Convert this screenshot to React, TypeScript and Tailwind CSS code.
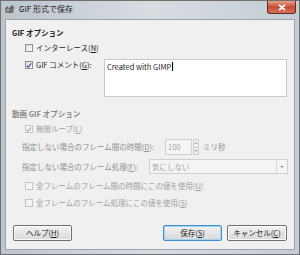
import React from "react";

const jp = { fontFamily: '"Noto Sans CJK JP", "Noto Sans", sans-serif' };

function Check({ checked, disabled }: { checked?: boolean; disabled?: boolean }) {
  return (
    <span
      className={`flex h-[8px] w-[8px] shrink-0 items-center justify-center border ${
        disabled ? "border-[#c4c4c4] bg-[#f4f4f4]" : "border-[#8e8f8f] bg-gradient-to-br from-[#dcdcdc] to-[#fdfdfd]"
      }`}
    >
      {checked && (
        <svg viewBox="0 0 8 8" className="h-[7px] w-[7px]">
          <path
            d="M1 4.2 L3 6.2 L7 1.2"
            fill="none"
            stroke={disabled ? "#a8a8a8" : "#2a4d8f"}
            strokeWidth="1.4"
          />
        </svg>
      )}
    </span>
  );
}

function Mn({ c }: { c: string }) {
  return <span className="underline underline-offset-1">{c}</span>;
}

function Btn({ children, def }: { children: React.ReactNode; def?: boolean }) {
  return (
    <div
      className={`flex h-[16px] items-center justify-center rounded-[2px] border bg-gradient-to-b from-[#f2f2f2] to-[#d9d9d9] text-[7.5px] text-[#1e1e1e] ${
        def ? "border-[#3c8fd0] shadow-[inset_0_0_0_1px_#9fd4f4]" : "border-[#707070] shadow-[inset_0_0_0_1px_#fbfbfb]"
      }`}
    >
      {children}
    </div>
  );
}

export default function App() {
  return (
    <div className="h-[255px] w-[300px] overflow-hidden bg-[#f0f0f0]" style={jp}>
      <div className="flex h-full w-full flex-col border border-[#6f6f6f] bg-gradient-to-r from-[#bcc4cc] via-[#d8dde2] to-[#c4ccd4]">
        {/* title bar */}
        <div className="flex h-[18px] shrink-0 items-start">
          <div className="ml-[3px] mt-[3px] flex h-[10px] w-[11px] items-end">
            <svg viewBox="0 0 11 10" className="h-[10px] w-[11px]">
              <path d="M1 5 L3 2 L5 4 L8 1 L10 3 L9 9 L2 9 Z" fill="#6b6b6b" />
              <circle cx="4" cy="6" r="1.5" fill="#a9a9a9" />
            </svg>
          </div>
          <span className="ml-[4px] mt-[2px] text-[8px] leading-[12px] text-[#1a1a1a]">GIF 形式で保存</span>
          <div className="ml-auto mr-[3px] flex h-[13px] w-[29px] items-center justify-center rounded-b-[3px] border border-t-0 border-[#5e2a20] bg-gradient-to-b from-[#e8a08a] via-[#c84a32] to-[#d8705a]">
            <svg viewBox="0 0 8 7" className="h-[7px] w-[8px]">
              <path d="M1 0.8 L7 6.2 M7 0.8 L1 6.2" stroke="#ffffff" strokeWidth="1.8" />
            </svg>
          </div>
        </div>
        {/* client */}
        <div className="mx-[4px] flex flex-1 flex-col border border-[#9aa3ab] bg-[#f0f0f0] text-[7.5px] leading-[10px] text-[#1e1e1e]">
          <div className="ml-[6px] mt-[7px] h-[12px] font-bold leading-[12px]">GIF オプション</div>
          <div className="ml-[19px] mt-[4px] flex h-[10px] items-center gap-[3px]">
            <Check />
            <span>
              インターレース(<Mn c="N" />)
            </span>
          </div>
          <div className="mt-[6px] flex h-[38px] items-start">
            <div className="ml-[19px] mt-[1px] flex h-[10px] items-center gap-[3px]">
              <Check checked />
              <span>
                GIF コメント(<Mn c="G" />):
              </span>
            </div>
            <div className="ml-auto mr-[7px] h-[38px] w-[183px] border border-[#c8c8c8] bg-white px-[2px] pt-[1px]">
              <span>Created with GIMP</span>
              <span className="ml-[1px] inline-block h-[9px] w-px translate-y-[1px] bg-black" />
            </div>
          </div>
          <div className="ml-[6px] mt-[11px] h-[12px] font-bold leading-[12px] text-[#8a8a8a]">動画 GIF オプション</div>
          <div className="ml-[19px] mt-[4px] flex h-[10px] items-center gap-[3px] text-[#a0a0a0]">
            <Check checked disabled />
            <span>
              無限ループ(<Mn c="L" />)
            </span>
          </div>
          <div className="mt-[5px] flex h-[16px] items-center text-[#8f8f8f]">
            <span className="ml-[16px] w-[143px]">
              指定しない場合のフレーム間の時間(<Mn c="D" />):
            </span>
            <div className="flex h-[16px] w-[27px] items-center border border-[#d0d0d0] bg-[#f4f4f4] pl-[2px] text-[#a4a4a4]">100</div>
            <div className="ml-px flex h-[16px] w-[6px] flex-col">
              <div className="flex flex-1 items-center justify-center border border-[#d0d0d0]">
                <svg viewBox="0 0 4 2" className="h-[2px] w-[4px]">
                  <path d="M0 2 L2 0 L4 2 Z" fill="#b0b0b0" />
                </svg>
              </div>
              <div className="flex flex-1 items-center justify-center border border-t-0 border-[#d0d0d0]">
                <svg viewBox="0 0 4 2" className="h-[2px] w-[4px]">
                  <path d="M0 0 L2 2 L4 0 Z" fill="#b0b0b0" />
                </svg>
              </div>
            </div>
            <span className="ml-[4px]">ミリ秒</span>
          </div>
          <div className="mt-[4px] flex h-[15px] items-center text-[#8f8f8f]">
            <span className="ml-[16px] w-[127px]">
              指定しない場合のフレーム処理(<Mn c="F" />):
            </span>
            <div className="flex h-[15px] w-[139px] items-center border border-[#d0d0d0] bg-[#f4f4f4] pl-[2px] text-[#a4a4a4]">
              <span>気にしない</span>
              <div className="ml-auto flex h-full w-[11px] items-center justify-center border-l border-[#d8d8d8]">
                <svg viewBox="0 0 4 2" className="h-[2px] w-[4px]">
                  <path d="M0 0 L2 2 L4 0 Z" fill="#9a9a9a" />
                </svg>
              </div>
            </div>
          </div>
          <div className="ml-[19px] mt-[7px] flex h-[10px] items-center gap-[3px] text-[#a0a0a0]">
            <Check disabled />
            <span>
              全フレームのフレーム間の時間にこの値を使用(<Mn c="U" />)
            </span>
          </div>
          <div className="ml-[19px] mt-[7px] flex h-[10px] items-center gap-[3px] text-[#a0a0a0]">
            <Check disabled />
            <span>
              全フレームのフレーム処理にこの値を使用(<Mn c="S" />)
            </span>
          </div>
          <div className="mt-[17px] flex items-center">
            <div className="ml-[7px] w-[59px]">
              <Btn>
                ヘルプ(<Mn c="H" />)
              </Btn>
            </div>
            <div className="ml-auto w-[59px]">
              <Btn def>
                保存(<Mn c="S" />)
              </Btn>
            </div>
            <div className="ml-[5px] mr-[7px] w-[60px]">
              <Btn>
                キャンセル(<Mn c="C" />)
              </Btn>
            </div>
          </div>
        </div>
        <div className="h-[4px] shrink-0" />
      </div>
    </div>
  );
}
